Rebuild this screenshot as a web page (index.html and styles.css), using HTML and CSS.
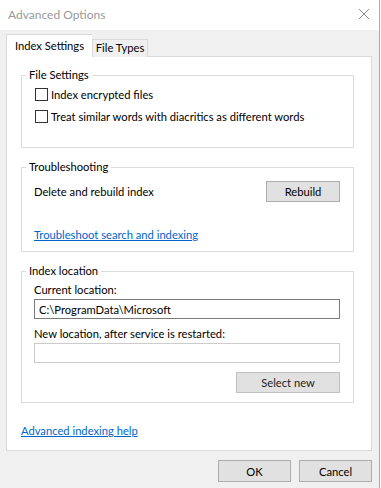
FILE: index.html
```html
<!DOCTYPE html>
<html lang="en">
<head>
    <meta charset="UTF-8">
    <title>Advanced Options</title>
    <link rel="stylesheet" href="styles.css">
</head>
<body>

    <div class="window">

        <div class="titlebar">
            <span class="title">Advanced Options</span>
            <svg class="close" width="12" height="12" viewBox="0 0 12 12">
                <path d="M1 1 L11 11 M11 1 L1 11" stroke="#8a8a8a" stroke-width="1" fill="none"/>
            </svg>
        </div>

        <div class="client">

            <div class="tabs">
                <div class="tab tab-active">Index Settings</div>
                <div class="tab tab-types">File Types</div>
            </div>

            <div class="panel">

                <fieldset class="group group-files">
                    <legend>File Settings</legend>
                    <label class="check"><span class="box"></span>Index encrypted files</label>
                    <label class="check"><span class="box"></span>Treat similar words with diacritics as different words</label>
                </fieldset>

                <fieldset class="group group-trouble">
                    <legend>Troubleshooting</legend>
                    <div class="row">
                        <span>Delete and rebuild index</span>
                        <button class="btn btn-wide">Rebuild</button>
                    </div>
                    <a class="link link-trouble" href="#">Troubleshoot search and indexing</a>
                </fieldset>

                <fieldset class="group group-location">
                    <legend>Index location</legend>
                    <div class="label">Current location:</div>
                    <input class="field" type="text" value="C:\ProgramData\Microsoft">
                    <div class="label label-new">New location, after service is restarted:</div>
                    <input class="field field-disabled" type="text" disabled>
                    <div class="pull-right">
                        <button class="btn btn-select">Select new</button>
                    </div>
                </fieldset>

                <a class="link link-help" href="#">Advanced indexing help</a>

            </div>

            <div class="footer">
                <button class="btn btn-dialog">OK</button>
                <button class="btn btn-dialog">Cancel</button>
            </div>

        </div>

    </div>

</body>
</html>
```

FILE: styles.css
```css
body {
    margin: 0;
    background: #fff;
    font: 11.2px Lato, "Liberation Sans", sans-serif;
    color: #000;
}
.window {
    width: 379px;
    height: 488px;
    border-right: 1px solid #a9a9a9;
    background: #f0f0f0;
}
.titlebar {
    height: 30px;
    background: #fff;
    display: flex;
    align-items: center;
    justify-content: space-between;
    padding: 0 9px 0 8px;
}
.title {
    color: #999;
    font-size: 12px;
    margin-top: -2px;
}
.close {
    margin-top: -2px;
}
.client {
    padding: 4px 7px 0 6px;
}
.tabs {
    display: flex;
    align-items: flex-end;
    height: 23px;
    margin-bottom: -1px;
    position: relative;
    z-index: 1;
}
.tab {
    box-sizing: border-box;
    height: 18px;
    line-height: 16px;
    text-align: center;
    border: 1px solid #d9d9d9;
    border-bottom: none;
    background: #f0f0f0;
}
.tab-active {
    width: 86px;
    height: 23px;
    padding-top: 3px;
    background: #fff;
    border-right: none;
}
.tab-types {
    width: 56px;
}
.panel {
    background: #fff;
    border: 1px solid #d9d9d9;
    padding: 10px 17px 9px 14px;
    height: 374px;
}
.group {
    margin: 0;
    border: 1px solid #dcdcdc;
    padding: 0 12px 20px 12px;
    min-width: 0;
}
.group legend {
    padding: 0 3px;
    margin-left: -8px;
    line-height: 16px;
}
.group-trouble,
.group-location {
    margin-top: 11px;
}
.group-trouble {
    padding-top: 6px;
    padding-bottom: 8px;
}
.group-location {
    padding-top: 3px;
    padding-bottom: 9px;
}
.check {
    display: flex;
    align-items: center;
    height: 22px;
    white-space: nowrap;
}
.box {
    box-sizing: border-box;
    flex: none;
    width: 13px;
    height: 13px;
    border: 1px solid #333;
    margin: 0 3px 0 1px;
    background: #fff;
}
.row {
    display: flex;
    justify-content: space-between;
    align-items: center;
    height: 21px;
}
.btn {
    box-sizing: border-box;
    font: 11.2px Lato, "Liberation Sans", sans-serif;
    color: #000;
    background: #e1e1e1;
    border: 1px solid #adadad;
    height: 21px;
    padding: 0;
}
.btn-wide {
    width: 74px;
    margin-right: 1px;
}
.link {
    display: block;
    color: #0066cc;
    line-height: 16px;
}
.link-trouble {
    margin-top: 25px;
}
.label {
    line-height: 16px;
}
.label-new {
    margin-top: 7px;
}
.field {
    box-sizing: border-box;
    display: block;
    width: 306px;
    height: 20px;
    margin-top: 1px;
    border: 1px solid #7a7a7a;
    padding: 0 4px;
    font: 11.2px Lato, "Liberation Sans", sans-serif;
    color: #000;
    background: #fff;
    outline: none;
}
.field-disabled {
    border-color: #cccccc;
}
.pull-right {
    display: flex;
    justify-content: flex-end;
    margin-top: 9px;
}
.btn-select {
    width: 104px;
    margin-right: 1px;
    border-color: #bfbfbf;
    color: #222;
}
.link-help {
    margin-top: 20px;
    display: inline-block;
}
.footer {
    display: flex;
    justify-content: flex-end;
    gap: 8px;
    margin-top: 9px;
}
.btn-dialog {
    width: 73px;
    height: 22px;
}
```
